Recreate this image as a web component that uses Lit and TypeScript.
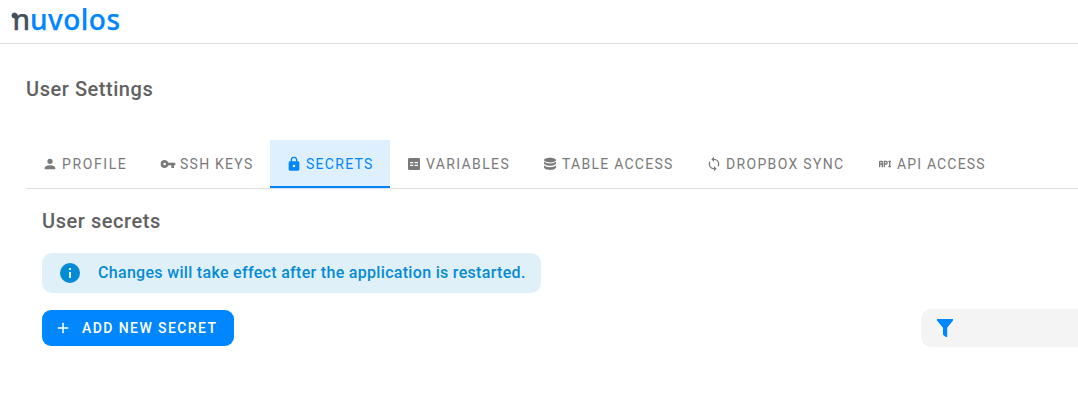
import { LitElement, html, css, svg } from "lit";
import { customElement } from "lit/decorators.js";
import { styleMap } from "lit/directives/style-map.js";

const icons = {
  account: svg`<path d="M12 4a4 4 0 0 1 4 4 4 4 0 0 1-4 4 4 4 0 0 1-4-4 4 4 0 0 1 4-4m0 10c4.42 0 8 1.79 8 4v2H4v-2c0-2.21 3.58-4 8-4z"/>`,
  key: svg`<path d="M7 14a2 2 0 0 1-2-2 2 2 0 0 1 2-2 2 2 0 0 1 2 2 2 2 0 0 1-2 2m5.65-4A5.99 5.99 0 0 0 7 6a6 6 0 0 0-6 6 6 6 0 0 0 6 6c2.61 0 4.83-1.67 5.65-4H17v4h4v-4h2v-4H12.65z"/>`,
  lock: svg`<path d="M12 17a2 2 0 0 0 2-2 2 2 0 0 0-2-2 2 2 0 0 0-2 2 2 2 0 0 0 2 2m6-9a2 2 0 0 1 2 2v10a2 2 0 0 1-2 2H6a2 2 0 0 1-2-2V10a2 2 0 0 1 2-2h1V6a5 5 0 0 1 5-5 5 5 0 0 1 5 5v2h1m-6-5a3 3 0 0 0-3 3v2h6V6a3 3 0 0 0-3-3z"/>`,
  table: svg`<path fill-rule="evenodd" d="M5 3h14a2 2 0 0 1 2 2v14a2 2 0 0 1-2 2H5a2 2 0 0 1-2-2V5a2 2 0 0 1 2-2zM6 9v2h5V9zm7 0v2h5V9zm-7 4v2h5v-2zm7 0v2h5v-2z"/>`,
  database: svg`<path d="M12 2.500c4.700 0 9 1.500 9 3.500s-4.300 3.600-9 3.600S3 8 3 6s4.300-3.500 9-3.500zM3 8.300c1.500 1.900 5 2.900 9 2.900s7.500-1 9-2.900V11c0 2-4.300 3.700-9 3.700S3 13 3 11zm0 5.600c1.500 1.900 5 2.900 9 2.900s7.500-1 9-2.900V17c0 2.200-4.300 4-9 4s-9-1.800-9-4z"/>`,
  sync: svg`<path d="M12 18a6 6 0 0 1-6-6c0-1 .25-1.970.7-2.800L5.240 7.740A7.930 7.930 0 0 0 4 12a8 8 0 0 0 8 8v3l4-4-4-4m0-11V1L8 5l4 4V6a6 6 0 0 1 6 6c0 1-.25 1.970-.7 2.800l1.460 1.460A7.930 7.930 0 0 0 20 12a8 8 0 0 0-8-8z"/>`,
  api: svg`<path d="M7 7H5a2 2 0 0 0-2 2v8h2v-4h2v4h2V9a2 2 0 0 0-2-2m0 4H5V9h2m7-2h-4v10h2v-4h2a2 2 0 0 0 2-2V9a2 2 0 0 0-2-2m0 4h-2V9h2m6 0v6h1v2h-4v-2h1V9h-1V7h4v2z"/>`,
  info: svg`<path d="M13 9h-2V7h2m0 10h-2v-6h2m-1-9A10 10 0 0 0 2 12a10 10 0 0 0 10 10 10 10 0 0 0 10-10A10 10 0 0 0 12 2z"/>`,
  plus: svg`<path d="M19 13h-6v6h-2v-6H5v-2h6V5h2v6h6z"/>`,
  filter: svg`<path d="M4 3h16v1.600L14.200 11.800V21h-1.400L10 18.700v-6.900L4 4.600z"/>`,
};

const icon = (name: keyof typeof icons, size: number) =>
  html`<svg class="icon" width=${size} height=${size} viewBox="0 0 24 24">${icons[name]}</svg>`;

const tabs: { icon: keyof typeof icons; label: string; spacing: number; active?: boolean }[] = [
  { icon: "account", label: "PROFILE", spacing: 1.6 },
  { icon: "key", label: "SSH KEYS", spacing: 1.25 },
  { icon: "lock", label: "SECRETS", spacing: 1.28, active: true },
  { icon: "table", label: "VARIABLES", spacing: 1.37 },
  { icon: "database", label: "TABLE ACCESS", spacing: 1.25 },
  { icon: "sync", label: "DROPBOX SYNC", spacing: 1.33 },
  { icon: "api", label: "API ACCESS", spacing: 1.16 },
];

@customElement("app-root")
export class AppRoot extends LitElement {
  static styles = css`
    :host { display: block; height: 400px; overflow: hidden; background: #fff; color: #616161; font-family: Roboto, sans-serif; }
    * { box-sizing: border-box; }
    .icon { display: block; flex: none; fill: currentColor; }
    .header { height: 44px; border-bottom: 1px solid #e0e0e0; padding-left: 11px; }
    .logo { display: block; }
    .logo text { font: 500 28px "Noto Sans", sans-serif; stroke-width: .25px; }
    .dark { fill: #444f5a; stroke: #444f5a; }
    .blue { fill: #0086ff; stroke: #0086ff; }
    .main { padding-left: 26px; }
    h1, h2 { margin: 0; font-size: 20px; font-weight: 500; line-height: 32px; letter-spacing: .55px; white-space: nowrap; }
    h1 { padding-top: 29px; }
    .tabs { display: grid; grid-template-columns: 118px 126px 120px 136px 164px 171px 141px; height: 49px; margin-top: 35px; border-bottom: 1px solid #e0e0e0; }
    .tab { display: flex; align-items: center; gap: 4px; padding: 2px 0 0 16px; height: 48px; color: #7a7a7a; font-size: 14px; white-space: nowrap; border-bottom: 2px solid transparent; }
    .tab.active { color: #0086ff; background: #def0fe; border-color: #0086ff; }
    .panel { padding: 16px 0 0 16px; }
    .alert { display: flex; align-items: center; gap: 16px; width: 499px; height: 40px; margin-top: 16px; padding-left: 16px; border-radius: 10px; background: #e0f0f9; color: #048bd6; font-size: 16px; font-weight: 500; letter-spacing: .31px; white-space: nowrap; }
    .alert span { padding-bottom: 1px; }
    .row { display: flex; align-items: center; justify-content: space-between; height: 38px; margin-top: 16px; }
    .add { display: flex; align-items: center; gap: 10px; width: 192px; height: 36px; padding: 0 0 0 12px; border: 0; border-radius: 9px; background: #0086ff; color: #fff; font: 500 14px Roboto, sans-serif; letter-spacing: 1.42px; white-space: nowrap; }
    .filter { width: 157px; height: 38px; border-radius: 10px 0 0 10px; background: #f4f4f4; color: #0086ff; padding: 7px 12px; }
  `;

  render() {
    return html`
      <header class="header">
        <svg class="logo" width="112" height="42">
          <text class="dark" x="1.500" y="30">n</text>
          <circle class="dark" cx="3.500" cy="15.500" r="2.500"/>
          <text class="blue" x="19" y="30" textLength="90">uvolos</text>
        </svg>
      </header>
      <main class="main">
        <h1>User Settings</h1>
        <nav class="tabs">
          ${tabs.map((t) => html`
            <div class="tab ${t.active ? "active" : ""}" style=${styleMap({ letterSpacing: `${t.spacing}px` })}>
              ${icon(t.icon, 16)}<span>${t.label}</span>
            </div>`)}
        </nav>
        <section class="panel">
          <h2>User secrets</h2>
          <div class="alert">${icon("info", 24)}<span>Changes will take effect after the application is restarted.</span></div>
          <div class="row">
            <button class="add">${icon("plus", 18)}<span>ADD NEW SECRET</span></button>
            <div class="filter">${icon("filter", 24)}</div>
          </div>
        </section>
      </main>`;
  }
}
